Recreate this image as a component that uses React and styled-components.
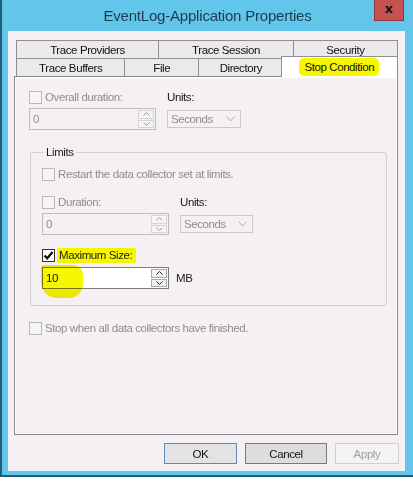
import React from 'react'
import styled, { createGlobalStyle } from 'styled-components'

const GlobalStyle = createGlobalStyle`
  html, body {
    margin: 0;
    padding: 0;
    background: #ffffff;
  }
  body {
    font-family: "Liberation Sans", Arial, sans-serif;
  }
`

const Check = () => (
  <svg width="11" height="11" viewBox="0 0 11 11">
    <path d="M1.5 5.5 L4.2 8.3 L9.6 2" fill="none" stroke="#111" strokeWidth="2.2" />
  </svg>
)

const Chevron = ({ up, color = '#555' }) => (
  <svg width="7" height="4" viewBox="0 0 7 4">
    <path d={up ? 'M0.5 3.5 L3.5 0.5 L6.5 3.5' : 'M0.5 0.5 L3.5 3.5 L6.5 0.5'} fill="none" stroke={color} strokeWidth="1" />
  </svg>
)

const App = () => {
  return (
    <>
      <GlobalStyle />
      <Window>
        <TitleBar>
          <Title>EventLog-Application Properties</Title>
          <CloseButton>x</CloseButton>
        </TitleBar>
        <Client>
          <TabRow>
            <Tab w={143}>Trace Providers</Tab>
            <Tab w={136}>Trace Session</Tab>
            <Tab w={105}>Security</Tab>
          </TabRow>
          <TabRow>
            <Tab w={110}>Trace Buffers</Tab>
            <Tab w={75}>File</Tab>
            <Tab w={86}>Directory</Tab>
            <SelectedTab>
              <Marker>Stop Condition</Marker>
            </SelectedTab>
          </TabRow>
          <Panel>
            <FieldGrid left={127} right={74}>
              <CheckRow>
                <Box />
                <Label disabled>Overall duration:</Label>
              </CheckRow>
              <Label>Units:</Label>
              <Spin>
                <SpinText disabled>0</SpinText>
                <SpinButtons>
                  <SpinButton><Chevron up color="#999" /></SpinButton>
                  <SpinButton><Chevron color="#999" /></SpinButton>
                </SpinButtons>
              </Spin>
              <Select>
                <span>Seconds</span>
                <SelectArrow viewBox="0 0 9 6"><path d="M0.5 0.5 L4.5 5 L8.5 0.5" fill="none" stroke="#b0b0b0" strokeWidth="1" /></SelectArrow>
              </Select>
            </FieldGrid>

            <Group>
              <Legend>Limits</Legend>
              <CheckRow>
                <Box />
                <Label disabled>Restart the data collector set at limits.</Label>
              </CheckRow>
              <FieldGrid left={127} right={73} top={15}>
                <CheckRow>
                  <Box />
                  <Label disabled>Duration:</Label>
                </CheckRow>
                <Label>Units:</Label>
                <Spin>
                  <SpinText disabled>0</SpinText>
                  <SpinButtons>
                    <SpinButton><Chevron up color="#999" /></SpinButton>
                    <SpinButton><Chevron color="#999" /></SpinButton>
                  </SpinButtons>
                </Spin>
                <Select>
                  <span>Seconds</span>
                  <SelectArrow viewBox="0 0 9 6"><path d="M0.5 0.5 L4.5 5 L8.5 0.5" fill="none" stroke="#b0b0b0" strokeWidth="1" /></SelectArrow>
                </Select>
              </FieldGrid>
              <CheckRow top={14}>
                <Box checked><Check /></Box>
                <HighlightLabel>Maximum Size:</HighlightLabel>
              </CheckRow>
              <SizeRow>
                <Spin enabled>
                  <SpinText>10</SpinText>
                  <Blob />
                  <SpinButtons>
                    <SpinButton enabled><Chevron up color="#222" /></SpinButton>
                    <SpinButton enabled><Chevron color="#222" /></SpinButton>
                  </SpinButtons>
                </Spin>
                <Label>MB</Label>
              </SizeRow>
            </Group>

            <CheckRow top={16}>
              <Box />
              <Label disabled>Stop when all data collectors have finished.</Label>
            </CheckRow>
          </Panel>
          <ButtonRow>
            <Button w={73} primary>OK</Button>
            <Button w={82}>Cancel</Button>
            <Button w={64} disabled>Apply</Button>
          </ButtonRow>
        </Client>
      </Window>
    </>
  )
}

export default App

const Window = styled.div`
    width: 413px;
    height: 477px;
    box-sizing: border-box;
    background: #62c6ea;
    border-left: 2px solid #1f5d78;
    border-bottom: 2px solid #1f5d78;
    display: flex;
    flex-direction: column;
`
const TitleBar = styled.div`
    height: 31px;
    flex-shrink: 0;
    display: grid;
    grid-template-columns: 1fr auto 1fr;
    align-items: start;
`
const Title = styled.div`
    grid-column: 2;
    font-size: 15px;
    line-height: 31px;
    letter-spacing: -0.2px;
    color: #1b3b4c;
`
const CloseButton = styled.div`
    grid-column: 3;
    justify-self: end;
    margin-right: 9px;
    width: 30px;
    height: 21px;
    box-sizing: border-box;
    background: #c75150;
    border: 1px solid #8e3534;
    border-top: none;
    display: flex;
    align-items: center;
    justify-content: center;
    font-family: "DejaVu Sans", sans-serif;
    font-weight: bold;
    font-size: 13px;
    color: #111;
    padding-bottom: 3px;
`
const Client = styled.div`
    flex: 1;
    margin: 0 8px 4px 6px;
    background: #f4f0f4;
    padding: 9px 7px 0 6px;
    display: flex;
    flex-direction: column;
    font-size: 11.5px;
    letter-spacing: -0.4px;
    color: #1a1a1a;
`
const TabRow = styled.div`
    display: flex;
    height: 18px;
    padding-left: 2px;
`
const Tab = styled.div`
    width: ${p => p.w}px;
    margin-right: -1px;
    box-sizing: border-box;
    border: 1px solid #8f8f8f;
    border-bottom: none;
    background: #ebe9eb;
    display: flex;
    align-items: center;
    justify-content: center;
    color: #111;
`
const SelectedTab = styled(Tab)`
    width: 118px;
    height: 21px;
    margin: -2px 0 -1px -2px;
    background: #ffffff;
    position: relative;
    z-index: 1;
`
const Marker = styled.span`
    background: #f6f600;
    border-radius: 5px;
    padding: 3px 5px;
`
const Panel = styled.div`
    width: 384px;
    height: 359px;
    box-sizing: border-box;
    border: 1px solid #8a8a8a;
    box-shadow: inset 0 0 0 1px #ffffff;
    background: #f4f0f4;
    padding: 14px 0 0 14px;
`
const FieldGrid = styled.div`
    display: grid;
    grid-template-columns: ${p => p.left}px ${p => p.right}px;
    column-gap: 11px;
    row-gap: 4px;
    align-items: center;
    margin-top: ${p => p.top || 0}px;
`
const CheckRow = styled.div`
    display: flex;
    align-items: center;
    gap: 3px;
    height: 13px;
    margin-top: ${p => p.top || 0}px;
`
const Box = styled.div`
    width: 13px;
    height: 13px;
    box-sizing: border-box;
    border: 1px solid ${p => (p.checked ? '#333333' : '#b9b9b9')};
    background: ${p => (p.checked ? '#ffffff' : '#f6f4f6')};
    display: flex;
    align-items: center;
    justify-content: center;
    flex-shrink: 0;
`
const Label = styled.span`
    color: ${p => (p.disabled ? '#8e8e8e' : '#1a1a1a')};
    white-space: nowrap;
    line-height: 13px;
`
const HighlightLabel = styled.span`
    background: #f6f600;
    padding: 1px 4px 1px 2px;
    margin-left: -1px;
    line-height: 13px;
    white-space: nowrap;
`
const Spin = styled.div`
    height: 22px;
    box-sizing: border-box;
    border: 1px solid ${p => (p.enabled ? '#7a7a7a' : '#bdbdbd')};
    background: ${p => (p.enabled ? '#ffffff' : '#f4f0f4')};
    display: flex;
    position: relative;
`
const SpinText = styled.div`
    flex: 1;
    padding-left: 3px;
    display: flex;
    align-items: center;
    color: ${p => (p.disabled ? '#8e8e8e' : '#111')};
    position: relative;
    z-index: 1;
`
const Blob = styled.div`
    position: absolute;
    left: -2px;
    top: -3px;
    width: 42px;
    height: 33px;
    background: #f6f600;
    border-radius: 4px 10px 14px 16px;
    mix-blend-mode: multiply;
`
const SpinButtons = styled.div`
    width: 16px;
    display: flex;
    flex-direction: column;
    gap: 1px;
    padding: 1px 1px 1px 0;
`
const SpinButton = styled.div`
    flex: 1;
    box-sizing: border-box;
    border: 1px solid ${p => (p.enabled ? '#a9a9a9' : '#d4d4d4')};
    background: ${p => (p.enabled ? '#f2f2f2' : '#f6f4f6')};
    display: flex;
    align-items: center;
    justify-content: center;
`
const Select = styled.div`
    height: 18px;
    box-sizing: border-box;
    border: 1px solid #c9c9c9;
    background: #f4f0f4;
    display: flex;
    align-items: center;
    justify-content: space-between;
    padding: 0 5px 0 3px;
    color: #8e8e8e;
`
const SelectArrow = styled.svg`
    width: 9px;
    height: 6px;
`
const Group = styled.fieldset`
    width: 357px;
    box-sizing: border-box;
    margin: 16px 0 0 1px;
    padding: 9px 0 16px 11px;
    border: 1px solid #d3d0d3;
    border-radius: 3px;
`
const Legend = styled.legend`
    padding: 0 2px;
    margin-left: 2px;
    line-height: 13px;
    color: #1a1a1a;
`
const SizeRow = styled.div`
    display: flex;
    align-items: center;
    gap: 7px;
    margin-top: 5px;

    & > :first-child {
        width: 127px;
    }
`
const ButtonRow = styled.div`
    display: flex;
    justify-content: flex-end;
    gap: 8px;
    padding: 8px 0 0;
    margin-right: -1px;
`
const Button = styled.div`
    width: ${p => p.w}px;
    height: 21px;
    box-sizing: border-box;
    display: flex;
    align-items: center;
    justify-content: center;
    border: 1px solid ${p => (p.primary ? '#5a8db8' : p.disabled ? '#cfcfcf' : '#7a7a7a')};
    background: ${p => (p.disabled ? '#f4f2f4' : p.primary ? '#e3e3e3' : '#dddddd')};
    color: ${p => (p.disabled ? '#a0a0a0' : '#111')};
`
